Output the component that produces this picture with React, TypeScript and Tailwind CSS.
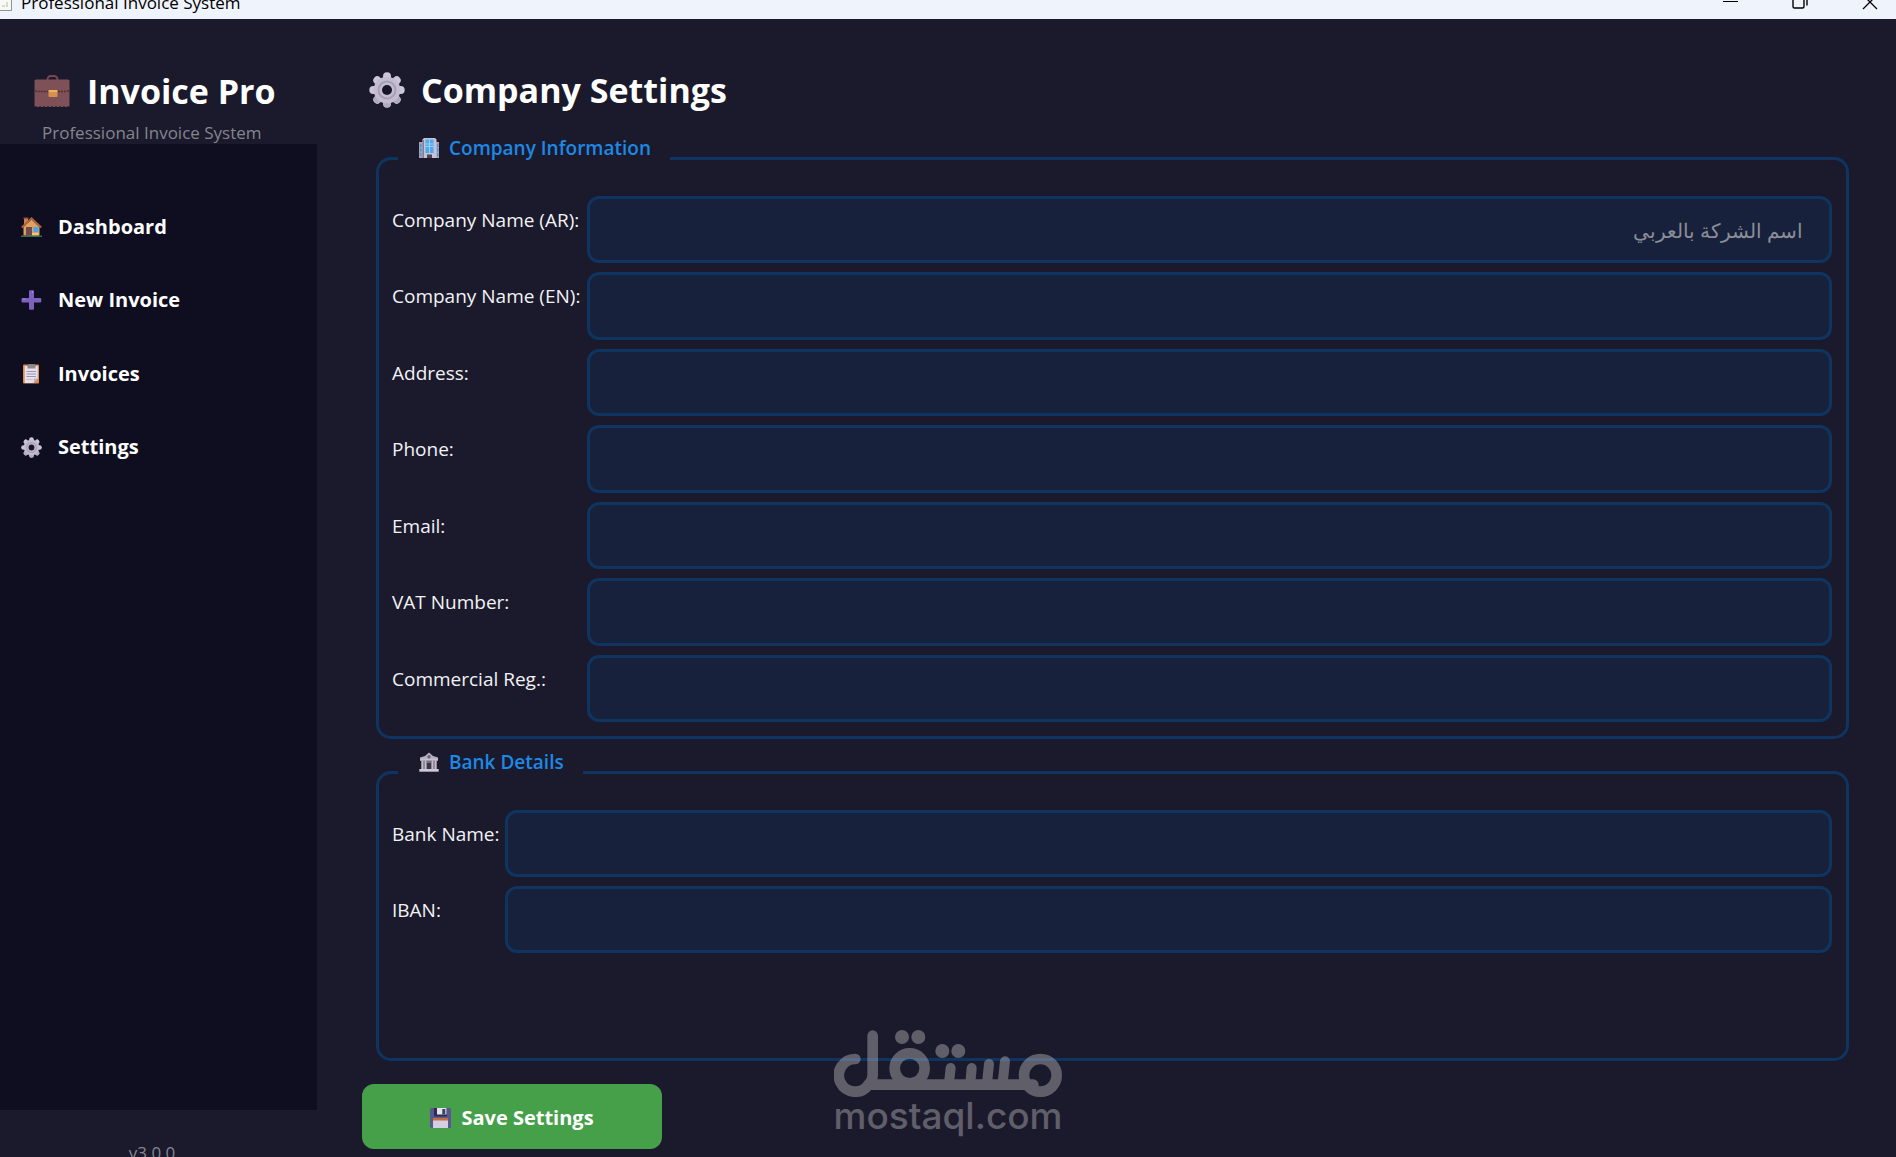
import { useId } from "react"
import type { ReactNode } from "react"

function BriefcaseIcon() {
    return (
        <svg viewBox="0 0 36 34" className="w-9 h-[34px] shrink-0" aria-hidden="true">
            <path d="M13.500 7V5.500A3.500 3.500 0 0 1 17 2h3a3.500 3.500 0 0 1 3.500 3.500V7" fill="none" stroke="#7a4550" strokeWidth="2" />
            <rect x="0.500" y="5.500" width="35" height="27.500" rx="1.500" fill="#7d5157" />
            <path d="M1 16.500c2 2 4 .5 6 1h8M21 17.500h8c2 0 4 0 6-1" fill="none" stroke="#4e2c3a" strokeWidth="1.500" strokeDasharray="2 1" />
            <path d="M1 32.500h34" stroke="#4a3040" strokeWidth="1" strokeDasharray="2 2" />
            <rect x="14.500" y="16" width="9" height="7" rx="1" fill="#d8904f" />
            <rect x="14.500" y="16" width="9" height="2" rx="1" fill="#eeb05c" />
        </svg>
    )
}

function GearIcon({ className }: { className: string }) {
    return (
        <svg viewBox="0 0 36 36" className={className} aria-hidden="true">
            <g stroke="#cdc5d8" strokeWidth="8" strokeLinecap="round">
                <path d="M18 4.300v27.400" />
                <path d="M4.300 18h27.400" />
                <path d="M8.300 8.300l19.400 19.400" />
                <path d="M27.700 8.300L8.300 27.700" />
            </g>
            <path d="M18 28v3.500M9 27l-.5.5M27 27l.5.5" stroke="#b3aac1" strokeWidth="7.500" strokeLinecap="round" />
            <circle cx="18" cy="18" r="13.300" fill="#c4bcd0" />
            <circle cx="18" cy="18" r="8.500" fill="none" stroke="#a8a0b5" strokeWidth="2" />
            <circle cx="18" cy="18" r="5" fill="#171728" />
        </svg>
    )
}

function HouseIcon() {
    return (
        <svg viewBox="0 0 21 20" className="w-[21px] h-5 shrink-0" aria-hidden="true">
            <rect x="3" y="1" width="4" height="7" fill="#c98149" />
            <rect x="2.500" y="0.500" width="5" height="1.500" fill="#8f5148" />
            <path d="M2.500 10L10.500 2.500l8 7.500v8.500h-16z" fill="#dfa25e" />
            <path d="M.8 10.500L10.500 1.300l9.700 9.200" fill="none" stroke="#ad6140" strokeWidth="1.900" />
            <rect x="5" y="10" width="6" height="8.500" fill="#74484f" />
            <rect x="12.500" y="10" width="5" height="5" fill="#4aa5f0" />
            <rect x="11" y="16" width="6.500" height="2.500" fill="#edc487" />
            <rect x="0" y="18.600" width="21" height="1.200" fill="#3c8c50" />
        </svg>
    )
}

function PlusIcon() {
    return (
        <svg viewBox="0 0 21 20" className="w-[21px] h-5 shrink-0" aria-hidden="true">
            <path d="M8 1.200Q8 .2 9 .2h3q1 0 1 1V8h6.300q1 0 1 1v2.600q0 1-1 1H13v6.200q0 1-1 1H9q-1 0-1-1v-6.200H1.500q-1 0-1-1V9q0-1 1-1H8z" fill="#7c61bd" />
            <path d="M11.500 1v2M2 9h2" stroke="#a48be0" strokeWidth="1" />
        </svg>
    )
}

function ClipboardIcon() {
    return (
        <svg viewBox="0 0 21 20" className="w-[21px] h-5 shrink-0" aria-hidden="true">
            <rect x="2" y="0.500" width="16" height="19" rx="1" fill="#d98c4e" />
            <path d="M3.700 2h13v12.500l-4 4.500h-9z" fill="#e6e1ef" />
            <path d="M12.700 19v-4.500h4z" fill="#b9afc8" />
            <path d="M6.500 4V2.200Q6.500.2 8.500.2h4q2 0 2 2V4.600h-8z" fill="#8d8993" />
            <path d="M5.500 7.500h9.500M5.500 10h9.500M5.500 12.500h9.500" stroke="#9d93ad" strokeWidth="1" />
            <path d="M5.500 15.500h6" stroke="#c5bdd2" strokeWidth="1" />
        </svg>
    )
}

function OfficeIcon() {
    return (
        <svg viewBox="0 0 20 20" className="w-5 h-5 shrink-0" aria-hidden="true">
            <path d="M0 4h5v16H0zM15 4h5v16h-5z" fill="#a7a0b3" />
            <path d="M3.500 1.500L5 0h11l1.500 1.500V20h-14z" fill="#c9c2d3" />
            <path d="M3.500 2v18H5V2z" fill="#827c8d" />
            <path d="M1 6h1.500v3H1zM1 10.500h1.500v3H1zM1 15h1.500v3H1zM18 6h1.500v3H18zM18 10.500h1.500v3H18zM18 15h1.500v3H18z" fill="#3f9be8" />
            <rect x="6.500" y="1.500" width="8" height="13.500" fill="#4aaaf2" />
            <path d="M10.500 1.500V15M6.500 6h8M6.500 8.500h8" stroke="#a9d4f7" strokeWidth="0.900" />
            <rect x="8" y="16.500" width="5" height="3.500" fill="#4c4453" />
        </svg>
    )
}

function BankIcon() {
    return (
        <svg viewBox="0 0 20 20" className="w-5 h-5 shrink-0" aria-hidden="true">
            <path d="M1 5.500l5-1.500L10 .4l4 3.600 5 1.500v3H1z" fill="#b9b1c2" />
            <path d="M2 8.500h16V17H2z" fill="#77717f" />
            <path d="M3.500 8.500v9M6.500 8.500v9M13.500 8.500v9M16.500 8.500v9" stroke="#c4bccd" strokeWidth="1.700" />
            <rect x="8" y="11" width="4" height="6" fill="#3c3846" />
            <circle cx="10" cy="4.700" r="1.700" fill="#6d637f" />
            <path d="M1 8h18" stroke="#d6d0dd" strokeWidth="1" />
            <path d="M.3 17h19.400v2.700H.3z" fill="#cfc8d8" />
        </svg>
    )
}

function FloppyIcon() {
    return (
        <svg viewBox="0 0 21 20" className="w-[21px] h-5 shrink-0" aria-hidden="true">
            <path d="M1.500 0h18q1.500 0 1.500 1.500V20H1.500L0 18.500v-17Q0 0 1.500 0z" fill="#5b5690" />
            <path d="M4 0h13v7.500q0 1-1 1H5q-1 0-1-1z" fill="#2f2c4d" />
            <path d="M7 0h9.500v6.500H7z" fill="#e6e1ef" />
            <rect x="12.300" y="1" width="3" height="5.500" fill="#2e4a66" />
            <rect x="3" y="10" width="15" height="10" fill="#d6cfe2" />
            <rect x="3" y="10" width="15" height="2.500" fill="#c0703c" />
        </svg>
    )
}

function TitleBar() {
    return (
        <header className="flex h-[19px] shrink-0 items-end justify-between overflow-hidden bg-[#eff3fb] text-black">
            <div className="flex items-end">
                <svg viewBox="0 0 12 14" className="mb-2 h-[14px] w-3" aria-hidden="true">
                    <path d="M-4 0h15.500v13.500H-4z" fill="#f8f8f4" stroke="#8d9299" />
                    <path d="M2 8h3v2H2zM6 5h2v5H6z" fill="#d3dccb" />
                </svg>
                <span className="ml-[9px] pb-1 text-[17px] leading-6 whitespace-nowrap">Professional Invoice System</span>
            </div>
            <div className="flex items-end gap-[54px] pr-[18px]">
                <button type="button" aria-label="Minimize" className="block">
                    <svg viewBox="0 0 15 19" className="h-[19px] w-[15px]" aria-hidden="true">
                        <path d="M0 1.500h15" stroke="#000" />
                    </svg>
                </button>
                <button type="button" aria-label="Restore" className="block">
                    <svg viewBox="0 0 16 19" className="h-[19px] w-4" aria-hidden="true">
                        <path d="M1 -2v8.500q0 1.500 1.500 1.500h8q1.500 0 1.500-1.500V-2M15 -2v7.500" fill="none" stroke="#000" strokeWidth="1.400" />
                    </svg>
                </button>
                <button type="button" aria-label="Close" className="block">
                    <svg viewBox="0 0 16 19" className="h-[19px] w-4" aria-hidden="true">
                        <path d="M1 9L15 -5M15 9L1 -5" stroke="#000" strokeWidth="1.300" />
                    </svg>
                </button>
            </div>
        </header>
    )
}

const navItems = [
    { label: "Dashboard", icon: <HouseIcon /> },
    { label: "New Invoice", icon: <PlusIcon /> },
    { label: "Invoices", icon: <ClipboardIcon /> },
    { label: "Settings", icon: <GearIcon className="w-[21px] h-[21px] shrink-0" /> },
]

function Sidebar() {
    return (
        <aside className="flex w-[317px] shrink-0 flex-col">
            <div className="flex h-[125px] flex-col justify-end pl-[34px]">
                <div className="flex items-center gap-[17px]">
                    <BriefcaseIcon />
                    <span className="text-[34px] leading-[46px] font-bold whitespace-nowrap">Invoice Pro</span>
                </div>
                <p className="pl-2 pt-2 text-[17px] leading-[22px] whitespace-nowrap text-[#85858f]">Professional Invoice System</p>
            </div>
            <nav className="flex-1 bg-[#0e0e20] pt-[46px]">
                <div className="grid h-[294px] auto-rows-fr">
                    {navItems.map((item) => (
                        <button key={item.label} type="button" className="flex items-center gap-4 pl-[21px] text-left text-[20px] leading-7 font-bold">
                            {item.icon}
                            {item.label}
                        </button>
                    ))}
                </div>
            </nav>
            <footer className="h-[47px] overflow-hidden pt-[31px] text-center text-[17px] leading-6 text-[#85858f]">
                <span className="mr-[13px]">v3.0.0</span>
            </footer>
        </aside>
    )
}

type GroupProps = {
    title: string
    icon: ReactNode
    className?: string
    children: ReactNode
}

function Group({ title, icon, className = "", children }: GroupProps) {
    return (
        <fieldset className={`ml-[14px] mr-0.5 rounded-[15px] border-[3px] border-[#0f3460] pl-[13px] pr-[14px] pt-[14px] pb-[14px] ${className}`}>
            <legend className="ml-[6px] flex gap-[10px] pb-5 pl-[21px] pr-[19px] text-[19px] leading-[27px] font-semibold text-[#1e88e5]">
                <span className="pt-[3px]">{icon}</span>
                {title}
            </legend>
            {children}
        </fieldset>
    )
}

function Field({ label, placeholder }: { label: string; placeholder?: string }) {
    const id = useId()
    return (
        <>
            <label htmlFor={id} className="pt-[11px] text-[19px] leading-[27px] whitespace-nowrap text-[#f2f2f5]">{label}</label>
            <input
                id={id}
                type="text"
                dir={placeholder ? "rtl" : "ltr"}
                placeholder={placeholder}
                className="min-h-16 w-full min-w-0 rounded-xl border-[3px] border-[#0f3460] bg-[#17213c] px-[26px] pt-[3px] text-[20px] text-white placeholder:text-[#8b8d97] outline-none"
            />
        </>
    )
}

function Watermark() {
    return (
        <div className="pointer-events-none absolute bottom-[19px] left-1/2 flex w-[228px] -translate-x-1/2 flex-col items-center text-[#c8c4c4] opacity-40">
            <svg viewBox="102 57 684 201" className="h-[67px] w-[228px]" aria-hidden="true">
                <g fill="none" stroke="currentColor" strokeWidth="32" strokeLinecap="round">
                    <path d="M166 144A49 49 0 1 0 205 222Q218 210 218 192V74" />
                    <circle cx="329" cy="172" r="45" />
                    <circle cx="721" cy="193" r="49" />
                    <path d="M205 221H700" />
                    <path d="M452 171L447 216M515 171L511 216M567 159L561 216M615 151L608 216" strokeWidth="30" />
                </g>
                <g fill="currentColor">
                    <circle cx="306" cy="78" r="21" />
                    <circle cx="355" cy="78" r="21" />
                    <circle cx="427" cy="120" r="21" />
                    <circle cx="475" cy="120" r="21" />
                </g>
            </svg>
            <span className="pb-[3px] font-['Inter','Liberation_Sans',sans-serif] text-[37px] leading-[38px] font-medium">mostaql.com</span>
        </div>
    )
}

export default function App() {
    return (
        <div className="relative flex h-screen flex-col overflow-hidden bg-[#1a1a2c] font-['Open_Sans','Noto_Sans',sans-serif] text-white">
            <TitleBar />
            <div className="flex min-h-0 flex-1">
                <Sidebar />
                <main className="flex min-w-0 flex-1 flex-col pl-[45px] pr-[45px] pt-[48px] pb-2">
                    <h1 className="flex items-center gap-4 pl-[7px] text-[34px] leading-[46px] font-bold">
                        <GearIcon className="w-9 h-9 shrink-0" />
                        Company Settings
                    </h1>

                    <Group title="Company Information" icon={<OfficeIcon />} className="mt-[22px]">
                        <div className="grid min-h-[526px] auto-rows-fr grid-cols-[185px_1fr] gap-x-[10px] gap-y-[9px]">
                            <Field label="Company Name (AR):" placeholder="اسم الشركة بالعربي" />
                            <Field label="Company Name (EN):" />
                            <Field label="Address:" />
                            <Field label="Phone:" />
                            <Field label="Email:" />
                            <Field label="VAT Number:" />
                            <Field label="Commercial Reg.:" />
                        </div>
                    </Group>

                    <Group title="Bank Details" icon={<BankIcon />} className="mt-[10px] flex-1">
                        <div className="grid min-h-[143px] auto-rows-fr grid-cols-[103px_1fr] gap-x-[10px] gap-y-[9px]">
                            <Field label="Bank Name:" />
                            <Field label="IBAN:" />
                        </div>
                    </Group>

                    <button type="button" className="mt-[23px] flex h-[65px] w-[300px] shrink-0 items-center justify-center gap-[10px] rounded-xl bg-[#45a049] pt-[3px] text-[20px] font-bold">
                        <FloppyIcon />
                        Save Settings
                    </button>
                </main>
            </div>
            <Watermark />
        </div>
    )
}
